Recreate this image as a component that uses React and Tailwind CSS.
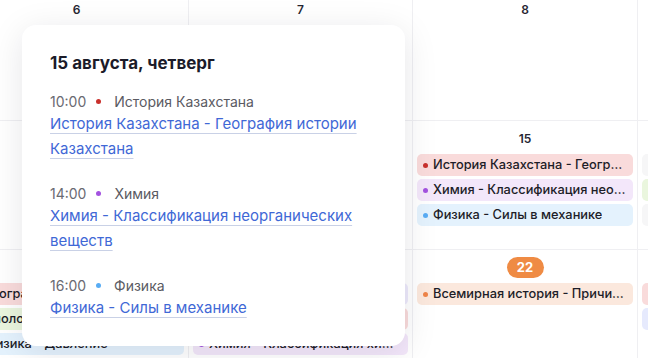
const rows = [
  [
    { day: '6', events: [] },
    { day: '7', events: [] },
    { day: '8', events: [] },
    { day: '9', events: [] },
  ],
  [
    { day: '13', events: [] },
    { day: '14', events: [] },
    {
      day: '15',
      events: [
        { bg: 'bg-[#f9dbdb]', dot: 'bg-[#c9302c]', text: 'История Казахстана - География истории Казахстана' },
        { bg: 'bg-[#f3e7fa]', dot: 'bg-[#a352e0]', text: 'Химия - Классификация неорганических веществ' },
        { bg: 'bg-[#e4f2fd]', dot: 'bg-[#58acf4]', text: 'Физика - Силы в механике' },
      ],
    },
    {
      day: '16',
      events: [
        { bg: 'bg-[#f6f6f7]', dot: 'bg-[#8a8a8f]', text: 'Литература - Поэзия Абая' },
        { bg: 'bg-[#eaf6de]', dot: 'bg-[#8cc84b]', text: 'Биология - Клетка' },
        { bg: 'bg-[#f6f6f7]', dot: 'bg-[#8a8a8f]', text: 'Информатика - Алгоритмы' },
      ],
    },
  ],
  [
    {
      day: '20',
      events: [
        { bg: 'bg-[#f9dbdb]', dot: 'bg-[#c9302c]', text: 'География - Рельеф Казахстана' },
        { bg: 'bg-[#eaf6de]', dot: 'bg-[#8cc84b]', text: 'Биология - Клетка и ткани' },
        { bg: 'bg-[#e4f2fd]', dot: 'bg-[#58acf4]', text: 'Физика - Давление' },
      ],
    },
    {
      day: '21',
      events: [
        { bg: 'bg-[#ede9fb]', dot: 'bg-[#7b6ae6]', text: 'Алгебра - Квадратные уравнения' },
        { bg: 'bg-[#f9dbdb]', dot: 'bg-[#c9302c]', text: 'История Казахстана - Казахское ханство' },
        { bg: 'bg-[#f3e7fa]', dot: 'bg-[#a352e0]', text: 'Химия - Классификация химических реакций' },
      ],
    },
    {
      day: '22',
      today: true,
      events: [
        { bg: 'bg-[#fbe8dd]', dot: 'bg-[#ef8448]', text: 'Всемирная история - Причины Первой мировой войны' },
      ],
    },
    {
      day: '23',
      events: [
        { bg: 'bg-[#f9dbdb]', dot: 'bg-[#c9302c]', text: 'История Казахстана - Алаш' },
        { bg: 'bg-[#e6eafd]', dot: 'bg-[#4667ee]', text: 'Геометрия - Треугольники' },
      ],
    },
  ],
]

const agenda = [
  { time: '10:00', dot: 'bg-[#c9302c]', subject: 'История Казахстана', title: 'История Казахстана - География истории Казахстана' },
  { time: '14:00', dot: 'bg-[#a352e0]', subject: 'Химия', title: 'Химия - Классификация неорганических веществ' },
  { time: '16:00', dot: 'bg-[#58acf4]', subject: 'Физика', title: 'Физика - Силы в механике' },
]

function Event({ ev }) {
  return (
    <div className={`flex items-center h-[22px] rounded-[5px] pl-[6px] pr-[6px] gap-[5px] ${ev.bg}`}>
      <span className={`w-[5px] h-[5px] rounded-full shrink-0 ${ev.dot}`} />
      <span className="truncate text-[12.8px] font-medium text-[#1d1d28] leading-none">{ev.text}</span>
    </div>
  )
}

function Cell({ cell }) {
  return (
    <div className="border-r border-b border-[#efeff2] px-1 pt-[7px] flex flex-col min-w-0">
      <div className="flex justify-center h-[21px] items-center mb-[5px]">
        {cell.today ? (
          <span className="h-[21px] w-[37px] rounded-full bg-[#ef8b44] text-white text-[13px] font-bold flex items-center justify-center">
            {cell.day}
          </span>
        ) : (
          <span className="text-[12px] font-semibold text-[#262632]">{cell.day}</span>
        )}
      </div>
      <div className="flex flex-col gap-[3px]">
        {cell.events.map((ev, i) => (
          <Event key={i} ev={ev} />
        ))}
      </div>
    </div>
  )
}

export default function App() {
  return (
    <div className="relative w-[648px] h-[358px] overflow-hidden bg-white font-['Inter',sans-serif]">
      <div className="grid grid-cols-[224px_224px_225px_224px] grid-rows-[129px_129px_129px] -ml-[35px] -mt-[8px]">
        {rows.flat().map((cell, i) => (
          <Cell key={i} cell={cell} />
        ))}
      </div>

      <div className="absolute left-[22px] top-[25px] w-[383px] rounded-[14px] bg-white px-[28px] pt-[26px] pb-[26px] shadow-[0_6px_34px_rgba(20,20,40,0.10)]">
        <h2 className="text-[17px] leading-[24px] font-bold text-[#1b1b29]">15 августа, четверг</h2>
        <div className="mt-4 flex flex-col gap-[22px]">
          {agenda.map((a) => (
            <div key={a.time}>
              <div className="flex items-center h-5 text-[14px] text-[#6a6a72]">
                <span>{a.time}</span>
                <span className={`ml-[10px] mr-[13px] w-[5px] h-[5px] rounded-full ${a.dot}`} />
                <span className="text-[#5a5a62]">{a.subject}</span>
              </div>
              <a
                href="#"
                className="text-[15px] leading-[24px] text-[#3f68d6] underline decoration-[#c9d1e6] underline-offset-[4px]"
              >
                {a.title}
              </a>
            </div>
          ))}
        </div>
      </div>
    </div>
  )
}
